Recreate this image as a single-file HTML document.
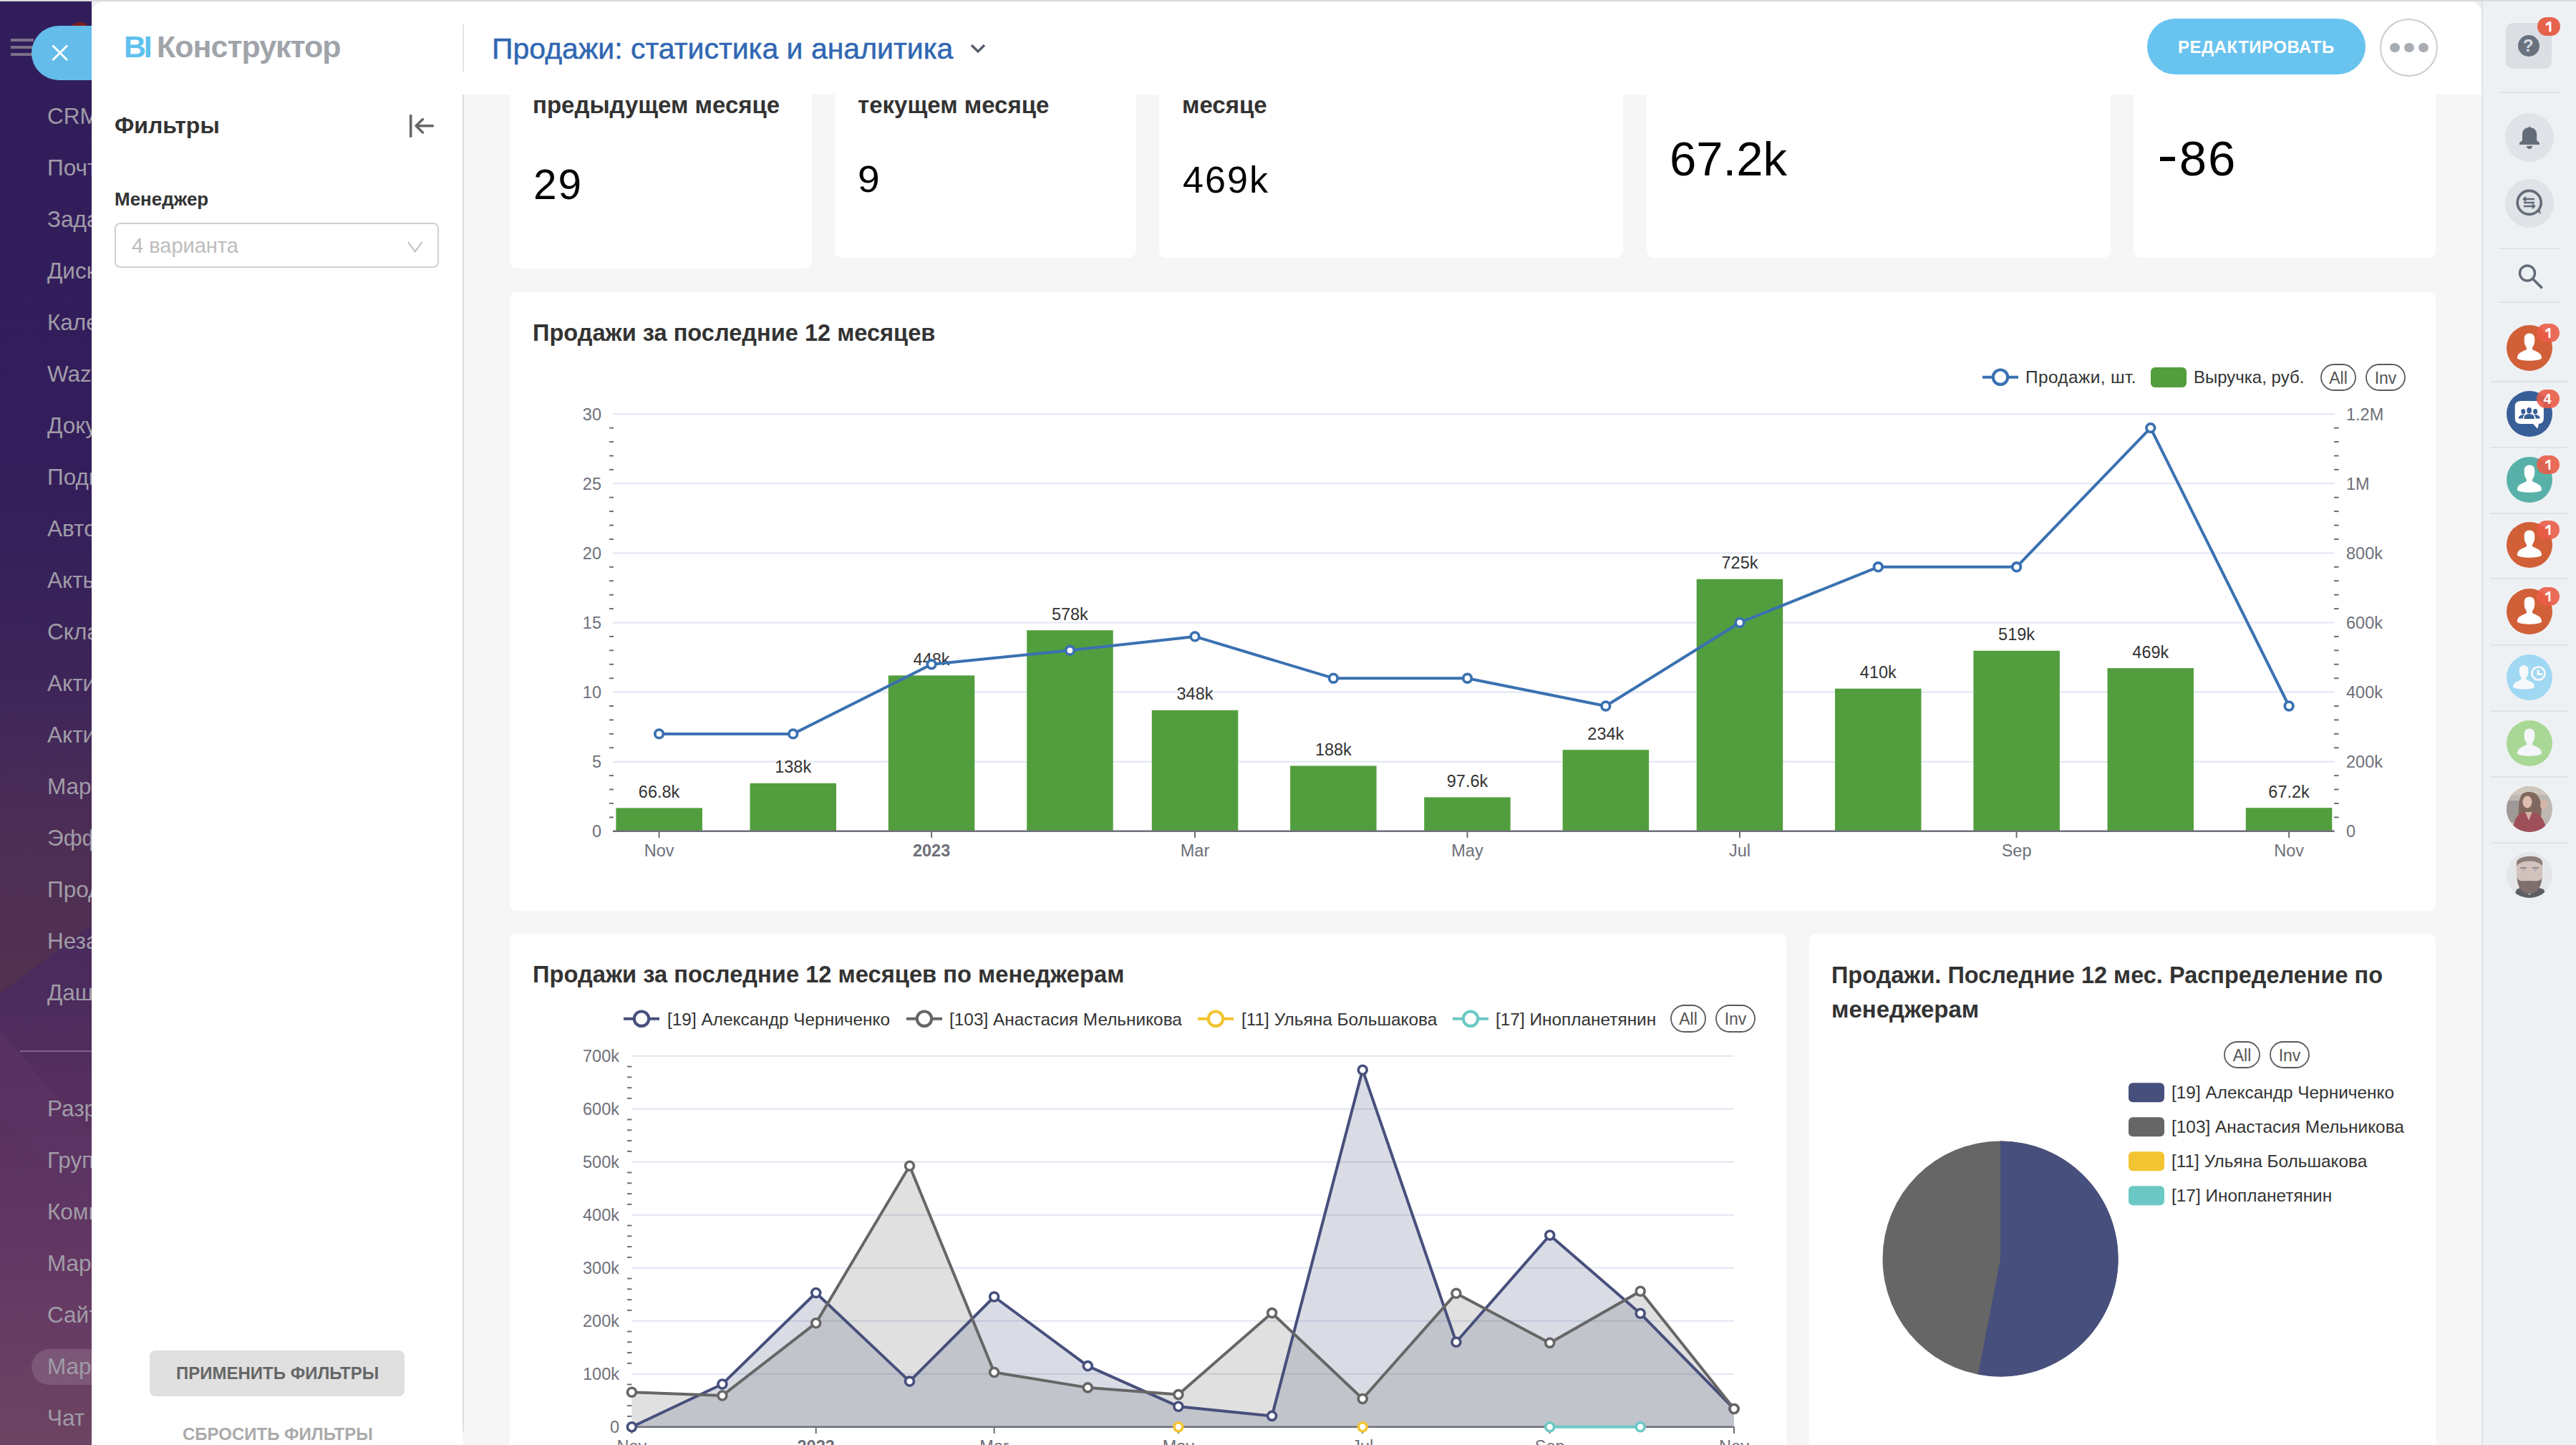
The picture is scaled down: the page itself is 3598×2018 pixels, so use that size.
<!DOCTYPE html><html><head><meta charset='utf-8'><style>
*{box-sizing:border-box;margin:0;padding:0}
html,body{width:3598px;height:2018px;overflow:hidden;background:#fff;font-family:"Liberation Sans", sans-serif}
.a{position:absolute}
.t{position:absolute;white-space:nowrap;line-height:1}
</style></head><body>
<div class='a' style='left:0;top:0;width:140px;height:2018px;overflow:hidden;background:linear-gradient(180deg,#321d5b 0px,#331e5b 650px,#3b2459 900px,#46295b 1150px,#4c2b5d 1400px,#58305f 1550px,#633764 1750px,#6e4463 2018px)'>
<svg class='a' style='left:0;top:0' width='140' height='2018'><defs><linearGradient id='lg1' x1='0' y1='0' x2='0' y2='1'><stop offset='0' stop-color='#43285a' stop-opacity='0'/><stop offset='0.5' stop-color='#4c2d55'/><stop offset='1' stop-color='#523150'/></linearGradient></defs><polygon points='0,980 140,930 140,1283 0,1387' fill='url(#lg1)'/><polygon points='0,1440 140,1600 140,1700 0,1560' fill='#5e3566' opacity='0.5'/></svg>
<div class='a' style='left:15px;top:54px;width:32px;height:3.8px;background:#7b7189'></div>
<div class='a' style='left:15px;top:64px;width:32px;height:3.8px;background:#7b7189'></div>
<div class='a' style='left:15px;top:74px;width:32px;height:3.8px;background:#7b7189'></div>
<div class='t' style='left:66px;top:147.4px;font-size:31.5px;color:#a09ca7'>CRM</div>
<div class='t' style='left:66px;top:219.4px;font-size:31.5px;color:#a09ca7'>Почта</div>
<div class='t' style='left:66px;top:291.4px;font-size:31.5px;color:#a09ca7'>Задачи</div>
<div class='t' style='left:66px;top:363.4px;font-size:31.5px;color:#a09ca7'>Диск</div>
<div class='t' style='left:66px;top:435.4px;font-size:31.5px;color:#a09ca7'>Календарь</div>
<div class='t' style='left:66px;top:507.4px;font-size:31.5px;color:#a09ca7'>Wazzup</div>
<div class='t' style='left:66px;top:579.4px;font-size:31.5px;color:#a09ca7'>Документы</div>
<div class='t' style='left:66px;top:651.4px;font-size:31.5px;color:#a09ca7'>Подписи</div>
<div class='t' style='left:66px;top:723.4px;font-size:31.5px;color:#a09ca7'>Автоматизация</div>
<div class='t' style='left:66px;top:795.4px;font-size:31.5px;color:#a09ca7'>Акты</div>
<div class='t' style='left:66px;top:867.4px;font-size:31.5px;color:#a09ca7'>Склад</div>
<div class='t' style='left:66px;top:939.4px;font-size:31.5px;color:#a09ca7'>Активности</div>
<div class='t' style='left:66px;top:1011.4px;font-size:31.5px;color:#a09ca7'>Активности</div>
<div class='t' style='left:66px;top:1083.4px;font-size:31.5px;color:#a09ca7'>Маркетинг</div>
<div class='t' style='left:66px;top:1155.4px;font-size:31.5px;color:#a09ca7'>Эффективность</div>
<div class='t' style='left:66px;top:1227.4px;font-size:31.5px;color:#a09ca7'>Продажи</div>
<div class='t' style='left:66px;top:1299.4px;font-size:31.5px;color:#a09ca7'>Незавершённые</div>
<div class='t' style='left:66px;top:1371.4px;font-size:31.5px;color:#a09ca7'>Дашборды</div>
<div class='a' style='left:28px;top:1467px;width:120px;height:2px;background:rgba(255,255,255,0.25)'></div>
<div class='t' style='left:66px;top:1533.3px;font-size:31.5px;color:#a09ca7'>Разработчикам</div>
<div class='t' style='left:66px;top:1605.3px;font-size:31.5px;color:#a09ca7'>Группы</div>
<div class='t' style='left:66px;top:1677.3px;font-size:31.5px;color:#a09ca7'>Компания</div>
<div class='t' style='left:66px;top:1749.3px;font-size:31.5px;color:#a09ca7'>Маркетплейс</div>
<div class='t' style='left:66px;top:1821.3px;font-size:31.5px;color:#a09ca7'>Сайты</div>
<div class='a' style='left:44px;top:1884px;width:140px;height:50px;border-radius:25px;background:rgba(255,255,255,0.13)'></div>
<div class='t' style='left:66px;top:1893.3px;font-size:31.5px;color:#a09ca7'>Маркетинг</div>
<div class='t' style='left:66px;top:1965.3px;font-size:31.5px;color:#a09ca7'>Чат и звонки</div>
</div>
<div class='a' style='left:3466px;top:0;width:132px;height:2018px;background:#eef1f4;border-left:2px solid #dde2e6'></div>
<div class='a' style='left:128px;top:0;width:30px;height:30px;background:#eceff2'></div>
<div class='a' style='left:3436px;top:0;width:30px;height:30px;background:#edf0f3'></div>
<div class='a' style='left:128px;top:2px;width:3338px;height:2016px;background:#fff;border-radius:17px 17px 0 0'></div>
<div class='a' style='left:646px;top:132px;width:2820px;height:1886px;background:#f6f6f6'></div>
<div class='a' style='left:712px;top:60px;width:422px;height:315px;background:#fff;border-radius:10px'></div>
<div class='a' style='left:1166px;top:60px;width:421px;height:300px;background:#fff;border-radius:10px'></div>
<div class='a' style='left:1619px;top:60px;width:648px;height:300px;background:#fff;border-radius:10px'></div>
<div class='a' style='left:2300px;top:60px;width:648px;height:300px;background:#fff;border-radius:10px'></div>
<div class='a' style='left:2980px;top:60px;width:422px;height:300px;background:#fff;border-radius:10px'></div>
<div class='a' style='left:712px;top:408px;width:2690px;height:864px;background:#fff;border-radius:10px'></div>
<div class='a' style='left:712px;top:1304px;width:1783px;height:796px;background:#fff;border-radius:10px'></div>
<div class='a' style='left:2527px;top:1304px;width:875px;height:796px;background:#fff;border-radius:10px'></div>
<div class='a' style='left:647px;top:2px;width:2819px;height:130px;background:#fff;border-top-right-radius:17px'></div>
<div class='a' style='left:0;top:0;width:3466px;height:2px;background:#d9dadd'></div>
<div class='a' style='left:3466px;top:0;width:132px;height:2px;background:#d9dadd'></div>
<div class='t' style='left:744px;top:130px;font-size:33px;font-weight:700;color:#333'>предыдущем месяце</div>
<div class='t' style='left:1198px;top:130px;font-size:33px;font-weight:700;color:#333'>текущем месяце</div>
<div class='t' style='left:1651px;top:130px;font-size:33px;font-weight:700;color:#333'>месяце</div>
<div class='a' style='left:647px;top:2px;width:2819px;height:130px;background:#fff;border-top-right-radius:17px'></div>
<div class='t' style='left:745px;top:228.6px;font-size:58.5px;color:#000;letter-spacing:2px;transform:scaleX(1);transform-origin:0 0'>29</div>
<div class='t' style='left:1198px;top:223.7px;font-size:52px;color:#000;letter-spacing:0px;transform:scaleX(1.06);transform-origin:0 0'>9</div>
<div class='t' style='left:1652px;top:224.7px;font-size:52px;color:#000;letter-spacing:2.1px;transform:scaleX(1);transform-origin:0 0'>469k</div>
<div class='t' style='left:2332px;top:187.5px;font-size:67px;color:#000;letter-spacing:0px;transform:scaleX(1);transform-origin:0 0'>67.2k</div>
<div class='a' style='left:3017px;top:219px;width:21px;height:5.6px;background:#000'></div>
<div class='t' style='left:3043.7px;top:186.8px;font-size:69px;color:#000;letter-spacing:2px;transform:scaleX(1);transform-origin:0 0'>86</div>
<div class='a' style='left:100px;top:31px;width:22px;height:14px;border-radius:50% 50% 0 0;background:#7e1e1e'></div>
<div class='a' style='left:44px;top:36px;width:84px;height:76px;border-radius:38px 0 0 38px;background:#63bce9'></div>
<svg class='a' style='left:60px;top:50px' width='50' height='50' viewBox='0 0 50 50'><path d='M13.5 13.5 L34 34 M34 13.5 L13.5 34' stroke='#fff' stroke-width='3'/></svg>
<div class='t' style='left:173px;top:43.5px;font-size:43px;font-weight:700;color:#5ec1ef;letter-spacing:-3.2px'>BI</div>
<div class='t' style='left:219px;top:43.5px;font-size:43px;font-weight:700;color:#a0a4aa;letter-spacing:-1px'>Конструктор</div>
<div class='a' style='left:646px;top:34px;width:2px;height:66px;background:#e3e4e6'></div>
<div class='t' style='left:687px;top:48px;font-size:41px;color:#3067b2;-webkit-text-stroke:0.5px #3067b2'>Продажи: статистика и аналитика</div>
<svg class='a' style='left:1352px;top:56px' width='32' height='24' viewBox='0 0 32 24'><path d='M5 7 L14 16 L23 7' stroke='#535c69' stroke-width='3.2' fill='none'/></svg>
<div class='a' style='left:2999px;top:26px;width:305px;height:78px;border-radius:39px;background:#69c3ef'></div>
<div class='t' style='left:3042px;top:54px;font-size:24px;font-weight:700;color:#fff;letter-spacing:0.5px'>РЕДАКТИРОВАТЬ</div>
<div class='a' style='left:3324px;top:26px;width:81px;height:81px;border-radius:50%;border:2px solid #c9ccd0;background:#fff'></div>
<div class='a' style='left:3338.2px;top:59.9px;width:13.6px;height:13.6px;border-radius:50%;background:#a8adb4'></div>
<div class='a' style='left:3358.2px;top:59.9px;width:13.6px;height:13.6px;border-radius:50%;background:#a8adb4'></div>
<div class='a' style='left:3378.2px;top:59.9px;width:13.6px;height:13.6px;border-radius:50%;background:#a8adb4'></div>
<div class='t' style='left:160px;top:159px;font-size:32px;font-weight:700;color:#333'>Фильтры</div>
<svg class='a' style='left:565px;top:155px' width='50' height='42' viewBox='0 0 50 42'><path d='M8.7 6.5 V35.5' stroke='#666' stroke-width='3.6' stroke-linecap='round'/><path d='M16 20.8 H39.5 M25.5 11.5 L16 20.8 L25.5 30' stroke='#666' stroke-width='3.4' stroke-linecap='round' stroke-linejoin='round' fill='none'/></svg>
<div class='t' style='left:160px;top:265px;font-size:26px;font-weight:700;color:#333'>Менеджер</div>
<div class='a' style='left:160px;top:311px;width:453px;height:63px;border:2px solid #d0d0d0;border-radius:8px;background:#fff'></div>
<div class='t' style='left:184px;top:329px;font-size:29px;color:#bdbdbd'>4 варианта</div>
<svg class='a' style='left:565px;top:332px' width='30' height='24' viewBox='0 0 30 24'><path d='M5 6 L14.7 19.3 L24.6 6' stroke='#bdbdbd' stroke-width='2' fill='none'/></svg>
<div class='a' style='left:209px;top:1886px;width:356px;height:64px;border-radius:8px;background:#e0e0e0'></div>
<div class='t' style='left:246px;top:1906px;font-size:24px;font-weight:700;color:#666'>ПРИМЕНИТЬ ФИЛЬТРЫ</div>
<div class='t' style='left:255px;top:1991px;font-size:24px;font-weight:700;color:#aaa'>СБРОСИТЬ ФИЛЬТРЫ</div>
<div class='a' style='left:646px;top:132px;width:2px;height:1867px;background:#dedede'></div>
<svg class='a' style='left:0;top:0' width='3598' height='2018' viewBox='0 0 3598 2018' font-family='Liberation Sans, sans-serif'><line x1='856' x2='3260.7' y1='1063.7' y2='1063.7' stroke='#e0e6f1' stroke-width='2'/><line x1='856' x2='3260.7' y1='966.6' y2='966.6' stroke='#e0e6f1' stroke-width='2'/><line x1='856' x2='3260.7' y1='869.5' y2='869.5' stroke='#e0e6f1' stroke-width='2'/><line x1='856' x2='3260.7' y1='772.4' y2='772.4' stroke='#e0e6f1' stroke-width='2'/><line x1='856' x2='3260.7' y1='675.3' y2='675.3' stroke='#e0e6f1' stroke-width='2'/><line x1='856' x2='3260.7' y1='578.2' y2='578.2' stroke='#e0e6f1' stroke-width='2'/><line x1='851' x2='857' y1='1141.4' y2='1141.4' stroke='#6e7079' stroke-width='2'/><line x1='3260' x2='3266.7' y1='1141.4' y2='1141.4' stroke='#6e7079' stroke-width='2'/><line x1='851' x2='857' y1='1122.0' y2='1122.0' stroke='#6e7079' stroke-width='2'/><line x1='3260' x2='3266.7' y1='1122.0' y2='1122.0' stroke='#6e7079' stroke-width='2'/><line x1='851' x2='857' y1='1102.5' y2='1102.5' stroke='#6e7079' stroke-width='2'/><line x1='3260' x2='3266.7' y1='1102.5' y2='1102.5' stroke='#6e7079' stroke-width='2'/><line x1='851' x2='857' y1='1083.1' y2='1083.1' stroke='#6e7079' stroke-width='2'/><line x1='3260' x2='3266.7' y1='1083.1' y2='1083.1' stroke='#6e7079' stroke-width='2'/><line x1='851' x2='857' y1='1044.3' y2='1044.3' stroke='#6e7079' stroke-width='2'/><line x1='3260' x2='3266.7' y1='1044.3' y2='1044.3' stroke='#6e7079' stroke-width='2'/><line x1='851' x2='857' y1='1024.9' y2='1024.9' stroke='#6e7079' stroke-width='2'/><line x1='3260' x2='3266.7' y1='1024.9' y2='1024.9' stroke='#6e7079' stroke-width='2'/><line x1='851' x2='857' y1='1005.4' y2='1005.4' stroke='#6e7079' stroke-width='2'/><line x1='3260' x2='3266.7' y1='1005.4' y2='1005.4' stroke='#6e7079' stroke-width='2'/><line x1='851' x2='857' y1='986.0' y2='986.0' stroke='#6e7079' stroke-width='2'/><line x1='3260' x2='3266.7' y1='986.0' y2='986.0' stroke='#6e7079' stroke-width='2'/><line x1='851' x2='857' y1='947.2' y2='947.2' stroke='#6e7079' stroke-width='2'/><line x1='3260' x2='3266.7' y1='947.2' y2='947.2' stroke='#6e7079' stroke-width='2'/><line x1='851' x2='857' y1='927.8' y2='927.8' stroke='#6e7079' stroke-width='2'/><line x1='3260' x2='3266.7' y1='927.8' y2='927.8' stroke='#6e7079' stroke-width='2'/><line x1='851' x2='857' y1='908.3' y2='908.3' stroke='#6e7079' stroke-width='2'/><line x1='3260' x2='3266.7' y1='908.3' y2='908.3' stroke='#6e7079' stroke-width='2'/><line x1='851' x2='857' y1='888.9' y2='888.9' stroke='#6e7079' stroke-width='2'/><line x1='3260' x2='3266.7' y1='888.9' y2='888.9' stroke='#6e7079' stroke-width='2'/><line x1='851' x2='857' y1='850.1' y2='850.1' stroke='#6e7079' stroke-width='2'/><line x1='3260' x2='3266.7' y1='850.1' y2='850.1' stroke='#6e7079' stroke-width='2'/><line x1='851' x2='857' y1='830.7' y2='830.7' stroke='#6e7079' stroke-width='2'/><line x1='3260' x2='3266.7' y1='830.7' y2='830.7' stroke='#6e7079' stroke-width='2'/><line x1='851' x2='857' y1='811.2' y2='811.2' stroke='#6e7079' stroke-width='2'/><line x1='3260' x2='3266.7' y1='811.2' y2='811.2' stroke='#6e7079' stroke-width='2'/><line x1='851' x2='857' y1='791.8' y2='791.8' stroke='#6e7079' stroke-width='2'/><line x1='3260' x2='3266.7' y1='791.8' y2='791.8' stroke='#6e7079' stroke-width='2'/><line x1='851' x2='857' y1='753.0' y2='753.0' stroke='#6e7079' stroke-width='2'/><line x1='3260' x2='3266.7' y1='753.0' y2='753.0' stroke='#6e7079' stroke-width='2'/><line x1='851' x2='857' y1='733.6' y2='733.6' stroke='#6e7079' stroke-width='2'/><line x1='3260' x2='3266.7' y1='733.6' y2='733.6' stroke='#6e7079' stroke-width='2'/><line x1='851' x2='857' y1='714.1' y2='714.1' stroke='#6e7079' stroke-width='2'/><line x1='3260' x2='3266.7' y1='714.1' y2='714.1' stroke='#6e7079' stroke-width='2'/><line x1='851' x2='857' y1='694.7' y2='694.7' stroke='#6e7079' stroke-width='2'/><line x1='3260' x2='3266.7' y1='694.7' y2='694.7' stroke='#6e7079' stroke-width='2'/><line x1='851' x2='857' y1='655.9' y2='655.9' stroke='#6e7079' stroke-width='2'/><line x1='3260' x2='3266.7' y1='655.9' y2='655.9' stroke='#6e7079' stroke-width='2'/><line x1='851' x2='857' y1='636.5' y2='636.5' stroke='#6e7079' stroke-width='2'/><line x1='3260' x2='3266.7' y1='636.5' y2='636.5' stroke='#6e7079' stroke-width='2'/><line x1='851' x2='857' y1='617.0' y2='617.0' stroke='#6e7079' stroke-width='2'/><line x1='3260' x2='3266.7' y1='617.0' y2='617.0' stroke='#6e7079' stroke-width='2'/><line x1='851' x2='857' y1='597.6' y2='597.6' stroke='#6e7079' stroke-width='2'/><line x1='3260' x2='3266.7' y1='597.6' y2='597.6' stroke='#6e7079' stroke-width='2'/><text x='840' y='1169.3' text-anchor='end' font-size='23.5' fill='#6e7079'>0</text><text x='840' y='1072.2' text-anchor='end' font-size='23.5' fill='#6e7079'>5</text><text x='840' y='975.1' text-anchor='end' font-size='23.5' fill='#6e7079'>10</text><text x='840' y='878.0' text-anchor='end' font-size='23.5' fill='#6e7079'>15</text><text x='840' y='780.9' text-anchor='end' font-size='23.5' fill='#6e7079'>20</text><text x='840' y='683.8' text-anchor='end' font-size='23.5' fill='#6e7079'>25</text><text x='840' y='586.7' text-anchor='end' font-size='23.5' fill='#6e7079'>30</text><text x='3277' y='1169.3' font-size='23.5' fill='#6e7079'>0</text><text x='3277' y='1072.2' font-size='23.5' fill='#6e7079'>200k</text><text x='3277' y='975.1' font-size='23.5' fill='#6e7079'>400k</text><text x='3277' y='878.0' font-size='23.5' fill='#6e7079'>600k</text><text x='3277' y='780.9' font-size='23.5' fill='#6e7079'>800k</text><text x='3277' y='683.8' font-size='23.5' fill='#6e7079'>1M</text><text x='3277' y='586.7' font-size='23.5' fill='#6e7079'>1.2M</text><rect x='860.4' y='1128.4' width='120.5' height='32.4' fill='#529e3e'/><text x='920.6' y='1113.9' text-anchor='middle' font-size='23.5' fill='#333'>66.8k</text><rect x='1047.5' y='1093.8' width='120.5' height='67.0' fill='#529e3e'/><text x='1107.7' y='1079.3' text-anchor='middle' font-size='23.5' fill='#333'>138k</text><rect x='1240.8' y='943.3' width='120.5' height='217.5' fill='#529e3e'/><text x='1301.1' y='928.8' text-anchor='middle' font-size='23.5' fill='#333'>448k</text><rect x='1434.2' y='880.2' width='120.5' height='280.6' fill='#529e3e'/><text x='1494.4' y='865.7' text-anchor='middle' font-size='23.5' fill='#333'>578k</text><rect x='1608.8' y='991.8' width='120.5' height='169.0' fill='#529e3e'/><text x='1669.0' y='977.3' text-anchor='middle' font-size='23.5' fill='#333'>348k</text><rect x='1802.1' y='1069.5' width='120.5' height='91.3' fill='#529e3e'/><text x='1862.4' y='1055.0' text-anchor='middle' font-size='23.5' fill='#333'>188k</text><rect x='1989.2' y='1113.4' width='120.5' height='47.4' fill='#529e3e'/><text x='2049.5' y='1098.9' text-anchor='middle' font-size='23.5' fill='#333'>97.6k</text><rect x='2182.6' y='1047.2' width='120.5' height='113.6' fill='#529e3e'/><text x='2242.8' y='1032.7' text-anchor='middle' font-size='23.5' fill='#333'>234k</text><rect x='2369.7' y='808.8' width='120.5' height='352.0' fill='#529e3e'/><text x='2430.0' y='794.3' text-anchor='middle' font-size='23.5' fill='#333'>725k</text><rect x='2563.0' y='961.7' width='120.5' height='199.1' fill='#529e3e'/><text x='2623.3' y='947.2' text-anchor='middle' font-size='23.5' fill='#333'>410k</text><rect x='2756.4' y='908.8' width='120.5' height='252.0' fill='#529e3e'/><text x='2816.6' y='894.3' text-anchor='middle' font-size='23.5' fill='#333'>519k</text><rect x='2943.5' y='933.1' width='120.5' height='227.7' fill='#529e3e'/><text x='3003.8' y='918.6' text-anchor='middle' font-size='23.5' fill='#333'>469k</text><rect x='3136.8' y='1128.2' width='120.5' height='32.6' fill='#529e3e'/><text x='3197.1' y='1113.7' text-anchor='middle' font-size='23.5' fill='#333'>67.2k</text><line x1='856' x2='3260.7' y1='1160.8' y2='1160.8' stroke='#6e7079' stroke-width='2.4'/><line x1='920.6' x2='920.6' y1='1160.8' y2='1170' stroke='#6e7079' stroke-width='2'/><text x='920.6' y='1196' text-anchor='middle' font-size='23.5' fill='#6e7079' >Nov</text><line x1='1301.1' x2='1301.1' y1='1160.8' y2='1170' stroke='#6e7079' stroke-width='2'/><text x='1301.1' y='1196' text-anchor='middle' font-size='23.5' fill='#6e7079' font-weight="700">2023</text><line x1='1669.0' x2='1669.0' y1='1160.8' y2='1170' stroke='#6e7079' stroke-width='2'/><text x='1669.0' y='1196' text-anchor='middle' font-size='23.5' fill='#6e7079' >Mar</text><line x1='2049.5' x2='2049.5' y1='1160.8' y2='1170' stroke='#6e7079' stroke-width='2'/><text x='2049.5' y='1196' text-anchor='middle' font-size='23.5' fill='#6e7079' >May</text><line x1='2430.0' x2='2430.0' y1='1160.8' y2='1170' stroke='#6e7079' stroke-width='2'/><text x='2430.0' y='1196' text-anchor='middle' font-size='23.5' fill='#6e7079' >Jul</text><line x1='2816.6' x2='2816.6' y1='1160.8' y2='1170' stroke='#6e7079' stroke-width='2'/><text x='2816.6' y='1196' text-anchor='middle' font-size='23.5' fill='#6e7079' >Sep</text><line x1='3197.1' x2='3197.1' y1='1160.8' y2='1170' stroke='#6e7079' stroke-width='2'/><text x='3197.1' y='1196' text-anchor='middle' font-size='23.5' fill='#6e7079' >Nov</text><polyline points='920.6,1024.9 1107.7,1024.9 1301.1,927.8 1494.4,908.3 1669.0,888.9 1862.4,947.2 2049.5,947.2 2242.8,986.0 2430.0,869.5 2623.3,791.8 2816.6,791.8 3003.8,597.6 3197.1,986.0' fill='none' stroke='#3a71b1' stroke-width='4' stroke-linejoin='round'/><circle cx='920.6' cy='1024.9' r='5.8' fill='#fff' stroke='#3a71b1' stroke-width='3.8'/><circle cx='1107.7' cy='1024.9' r='5.8' fill='#fff' stroke='#3a71b1' stroke-width='3.8'/><circle cx='1301.1' cy='927.8' r='5.8' fill='#fff' stroke='#3a71b1' stroke-width='3.8'/><circle cx='1494.4' cy='908.3' r='5.8' fill='#fff' stroke='#3a71b1' stroke-width='3.8'/><circle cx='1669.0' cy='888.9' r='5.8' fill='#fff' stroke='#3a71b1' stroke-width='3.8'/><circle cx='1862.4' cy='947.2' r='5.8' fill='#fff' stroke='#3a71b1' stroke-width='3.8'/><circle cx='2049.5' cy='947.2' r='5.8' fill='#fff' stroke='#3a71b1' stroke-width='3.8'/><circle cx='2242.8' cy='986.0' r='5.8' fill='#fff' stroke='#3a71b1' stroke-width='3.8'/><circle cx='2430.0' cy='869.5' r='5.8' fill='#fff' stroke='#3a71b1' stroke-width='3.8'/><circle cx='2623.3' cy='791.8' r='5.8' fill='#fff' stroke='#3a71b1' stroke-width='3.8'/><circle cx='2816.6' cy='791.8' r='5.8' fill='#fff' stroke='#3a71b1' stroke-width='3.8'/><circle cx='3003.8' cy='597.6' r='5.8' fill='#fff' stroke='#3a71b1' stroke-width='3.8'/><circle cx='3197.1' cy='986.0' r='5.8' fill='#fff' stroke='#3a71b1' stroke-width='3.8'/><line x1='2769' x2='2819' y1='526.7' y2='526.7' stroke='#3a71b1' stroke-width='4'/><circle cx='2794' cy='526.7' r='10.2' fill='#fff' stroke='#3a71b1' stroke-width='4.2'/><text x='2829' y='535.4' font-size='24.4' fill='#333' letter-spacing='0.4'>Продажи, шт.</text><rect x='3004' y='513' width='50' height='28' rx='6' fill='#529e3e'/><text x='3064' y='535.4' font-size='24' fill='#333'>Выручка, руб.</text><rect x='3242' y='509' width='48' height='36' rx='18.0' fill='#fff' stroke='#5a5a5a' stroke-width='1.8'/><text x='3266.0' y='535.5' text-anchor='middle' font-size='23' fill='#555'>All</text><rect x='3305' y='509' width='54' height='36' rx='18.0' fill='#fff' stroke='#5a5a5a' stroke-width='1.8'/><text x='3332.0' y='535.5' text-anchor='middle' font-size='23' fill='#555'>Inv</text><text x='744' y='475.5' font-size='32.6' font-weight='700' fill='#333'>Продажи за последние 12 месяцев</text><line x1='882.4' x2='2422' y1='1918.7' y2='1918.7' stroke='#e0e6f1' stroke-width='2'/><line x1='882.4' x2='2422' y1='1844.7' y2='1844.7' stroke='#e0e6f1' stroke-width='2'/><line x1='882.4' x2='2422' y1='1770.7' y2='1770.7' stroke='#e0e6f1' stroke-width='2'/><line x1='882.4' x2='2422' y1='1696.7' y2='1696.7' stroke='#e0e6f1' stroke-width='2'/><line x1='882.4' x2='2422' y1='1622.7' y2='1622.7' stroke='#e0e6f1' stroke-width='2'/><line x1='882.4' x2='2422' y1='1548.7' y2='1548.7' stroke='#e0e6f1' stroke-width='2'/><line x1='882.4' x2='2422' y1='1474.7' y2='1474.7' stroke='#e0e6f1' stroke-width='2'/><line x1='876' x2='882.4' y1='1977.9' y2='1977.9' stroke='#6e7079' stroke-width='2'/><line x1='876' x2='882.4' y1='1963.1' y2='1963.1' stroke='#6e7079' stroke-width='2'/><line x1='876' x2='882.4' y1='1948.3' y2='1948.3' stroke='#6e7079' stroke-width='2'/><line x1='876' x2='882.4' y1='1933.5' y2='1933.5' stroke='#6e7079' stroke-width='2'/><line x1='876' x2='882.4' y1='1903.9' y2='1903.9' stroke='#6e7079' stroke-width='2'/><line x1='876' x2='882.4' y1='1889.1' y2='1889.1' stroke='#6e7079' stroke-width='2'/><line x1='876' x2='882.4' y1='1874.3' y2='1874.3' stroke='#6e7079' stroke-width='2'/><line x1='876' x2='882.4' y1='1859.5' y2='1859.5' stroke='#6e7079' stroke-width='2'/><line x1='876' x2='882.4' y1='1829.9' y2='1829.9' stroke='#6e7079' stroke-width='2'/><line x1='876' x2='882.4' y1='1815.1' y2='1815.1' stroke='#6e7079' stroke-width='2'/><line x1='876' x2='882.4' y1='1800.3' y2='1800.3' stroke='#6e7079' stroke-width='2'/><line x1='876' x2='882.4' y1='1785.5' y2='1785.5' stroke='#6e7079' stroke-width='2'/><line x1='876' x2='882.4' y1='1755.9' y2='1755.9' stroke='#6e7079' stroke-width='2'/><line x1='876' x2='882.4' y1='1741.1' y2='1741.1' stroke='#6e7079' stroke-width='2'/><line x1='876' x2='882.4' y1='1726.3' y2='1726.3' stroke='#6e7079' stroke-width='2'/><line x1='876' x2='882.4' y1='1711.5' y2='1711.5' stroke='#6e7079' stroke-width='2'/><line x1='876' x2='882.4' y1='1681.9' y2='1681.9' stroke='#6e7079' stroke-width='2'/><line x1='876' x2='882.4' y1='1667.1' y2='1667.1' stroke='#6e7079' stroke-width='2'/><line x1='876' x2='882.4' y1='1652.3' y2='1652.3' stroke='#6e7079' stroke-width='2'/><line x1='876' x2='882.4' y1='1637.5' y2='1637.5' stroke='#6e7079' stroke-width='2'/><line x1='876' x2='882.4' y1='1607.9' y2='1607.9' stroke='#6e7079' stroke-width='2'/><line x1='876' x2='882.4' y1='1593.1' y2='1593.1' stroke='#6e7079' stroke-width='2'/><line x1='876' x2='882.4' y1='1578.3' y2='1578.3' stroke='#6e7079' stroke-width='2'/><line x1='876' x2='882.4' y1='1563.5' y2='1563.5' stroke='#6e7079' stroke-width='2'/><line x1='876' x2='882.4' y1='1533.9' y2='1533.9' stroke='#6e7079' stroke-width='2'/><line x1='876' x2='882.4' y1='1519.1' y2='1519.1' stroke='#6e7079' stroke-width='2'/><line x1='876' x2='882.4' y1='1504.3' y2='1504.3' stroke='#6e7079' stroke-width='2'/><line x1='876' x2='882.4' y1='1489.5' y2='1489.5' stroke='#6e7079' stroke-width='2'/><text x='865' y='2001.2' text-anchor='end' font-size='23.5' fill='#6e7079'>0</text><text x='865' y='1927.2' text-anchor='end' font-size='23.5' fill='#6e7079'>100k</text><text x='865' y='1853.2' text-anchor='end' font-size='23.5' fill='#6e7079'>200k</text><text x='865' y='1779.2' text-anchor='end' font-size='23.5' fill='#6e7079'>300k</text><text x='865' y='1705.2' text-anchor='end' font-size='23.5' fill='#6e7079'>400k</text><text x='865' y='1631.2' text-anchor='end' font-size='23.5' fill='#6e7079'>500k</text><text x='865' y='1557.2' text-anchor='end' font-size='23.5' fill='#6e7079'>600k</text><text x='865' y='1483.2' text-anchor='end' font-size='23.5' fill='#6e7079'>700k</text><polygon points='882.4,1992.7 882.4,1992.7 1008.9,1933.0 1139.7,1805.5 1270.5,1929.1 1388.6,1811.0 1519.3,1907.6 1645.9,1964.2 1776.6,1977.4 1903.2,1494.2 2033.9,1874.3 2164.7,1725.0 2291.2,1834.3 2422.0,1967.5 2422.0,1992.7' fill='rgba(71,79,124,0.2)'/><polygon points='882.4,1992.7 882.4,1944.2 1008.9,1949.0 1139.7,1847.7 1270.5,1628.2 1388.6,1916.5 1519.3,1937.9 1645.9,1947.6 1776.6,1833.6 1903.2,1953.5 2033.9,1806.2 2164.7,1875.4 2291.2,1803.3 2422.0,1967.5 2422.0,1992.7' fill='rgba(102,102,102,0.2)'/><line x1='882.4' x2='2422' y1='1992.7' y2='1992.7' stroke='#6e7079' stroke-width='2.4'/><line x1='882.4' x2='882.4' y1='1992.7' y2='2002' stroke='#6e7079' stroke-width='2'/><text x='882.4' y='2028' text-anchor='middle' font-size='23.5' fill='#6e7079' >Nov</text><line x1='1139.7' x2='1139.7' y1='1992.7' y2='2002' stroke='#6e7079' stroke-width='2'/><text x='1139.7' y='2028' text-anchor='middle' font-size='23.5' fill='#6e7079' font-weight="700">2023</text><line x1='1388.6' x2='1388.6' y1='1992.7' y2='2002' stroke='#6e7079' stroke-width='2'/><text x='1388.6' y='2028' text-anchor='middle' font-size='23.5' fill='#6e7079' >Mar</text><line x1='1645.9' x2='1645.9' y1='1992.7' y2='2002' stroke='#6e7079' stroke-width='2'/><text x='1645.9' y='2028' text-anchor='middle' font-size='23.5' fill='#6e7079' >May</text><line x1='1903.2' x2='1903.2' y1='1992.7' y2='2002' stroke='#6e7079' stroke-width='2'/><text x='1903.2' y='2028' text-anchor='middle' font-size='23.5' fill='#6e7079' >Jul</text><line x1='2164.7' x2='2164.7' y1='1992.7' y2='2002' stroke='#6e7079' stroke-width='2'/><text x='2164.7' y='2028' text-anchor='middle' font-size='23.5' fill='#6e7079' >Sep</text><line x1='2422.0' x2='2422.0' y1='1992.7' y2='2002' stroke='#6e7079' stroke-width='2'/><text x='2422.0' y='2028' text-anchor='middle' font-size='23.5' fill='#6e7079' >Nov</text><polyline points='882.4,1992.7 1008.9,1933.0 1139.7,1805.5 1270.5,1929.1 1388.6,1811.0 1519.3,1907.6 1645.9,1964.2 1776.6,1977.4 1903.2,1494.2 2033.9,1874.3 2164.7,1725.0 2291.2,1834.3 2422.0,1967.5' fill='none' stroke='#474f7c' stroke-width='4' stroke-linejoin='round'/><polyline points='882.4,1944.2 1008.9,1949.0 1139.7,1847.7 1270.5,1628.2 1388.6,1916.5 1519.3,1937.9 1645.9,1947.6 1776.6,1833.6 1903.2,1953.5 2033.9,1806.2 2164.7,1875.4 2291.2,1803.3 2422.0,1967.5' fill='none' stroke='#666666' stroke-width='4' stroke-linejoin='round'/><line x1='2164.7' x2='2291.2' y1='1992.7' y2='1992.7' stroke='#6cc8c5' stroke-width='4'/><circle cx='882.4' cy='1992.7' r='6' fill='#fff' stroke='#474f7c' stroke-width='3.6'/><circle cx='1008.9' cy='1933.0' r='6' fill='#fff' stroke='#474f7c' stroke-width='3.6'/><circle cx='1139.7' cy='1805.5' r='6' fill='#fff' stroke='#474f7c' stroke-width='3.6'/><circle cx='1270.5' cy='1929.1' r='6' fill='#fff' stroke='#474f7c' stroke-width='3.6'/><circle cx='1388.6' cy='1811.0' r='6' fill='#fff' stroke='#474f7c' stroke-width='3.6'/><circle cx='1519.3' cy='1907.6' r='6' fill='#fff' stroke='#474f7c' stroke-width='3.6'/><circle cx='1645.9' cy='1964.2' r='6' fill='#fff' stroke='#474f7c' stroke-width='3.6'/><circle cx='1776.6' cy='1977.4' r='6' fill='#fff' stroke='#474f7c' stroke-width='3.6'/><circle cx='1903.2' cy='1494.2' r='6' fill='#fff' stroke='#474f7c' stroke-width='3.6'/><circle cx='2033.9' cy='1874.3' r='6' fill='#fff' stroke='#474f7c' stroke-width='3.6'/><circle cx='2164.7' cy='1725.0' r='6' fill='#fff' stroke='#474f7c' stroke-width='3.6'/><circle cx='2291.2' cy='1834.3' r='6' fill='#fff' stroke='#474f7c' stroke-width='3.6'/><circle cx='2422.0' cy='1967.5' r='6' fill='#fff' stroke='#474f7c' stroke-width='3.6'/><circle cx='882.4' cy='1944.2' r='6' fill='#fff' stroke='#666666' stroke-width='3.6'/><circle cx='1008.9' cy='1949.0' r='6' fill='#fff' stroke='#666666' stroke-width='3.6'/><circle cx='1139.7' cy='1847.7' r='6' fill='#fff' stroke='#666666' stroke-width='3.6'/><circle cx='1270.5' cy='1628.2' r='6' fill='#fff' stroke='#666666' stroke-width='3.6'/><circle cx='1388.6' cy='1916.5' r='6' fill='#fff' stroke='#666666' stroke-width='3.6'/><circle cx='1519.3' cy='1937.9' r='6' fill='#fff' stroke='#666666' stroke-width='3.6'/><circle cx='1645.9' cy='1947.6' r='6' fill='#fff' stroke='#666666' stroke-width='3.6'/><circle cx='1776.6' cy='1833.6' r='6' fill='#fff' stroke='#666666' stroke-width='3.6'/><circle cx='1903.2' cy='1953.5' r='6' fill='#fff' stroke='#666666' stroke-width='3.6'/><circle cx='2033.9' cy='1806.2' r='6' fill='#fff' stroke='#666666' stroke-width='3.6'/><circle cx='2164.7' cy='1875.4' r='6' fill='#fff' stroke='#666666' stroke-width='3.6'/><circle cx='2291.2' cy='1803.3' r='6' fill='#fff' stroke='#666666' stroke-width='3.6'/><circle cx='2422.0' cy='1967.5' r='6' fill='#fff' stroke='#666666' stroke-width='3.6'/><circle cx='1645.9' cy='1992.7' r='6' fill='#fff' stroke='#f2c431' stroke-width='3.6'/><circle cx='1903.2' cy='1992.7' r='6' fill='#fff' stroke='#f2c431' stroke-width='3.6'/><circle cx='2164.7' cy='1992.7' r='6' fill='#fff' stroke='#6cc8c5' stroke-width='3.6'/><circle cx='2291.2' cy='1992.7' r='6' fill='#fff' stroke='#6cc8c5' stroke-width='3.6'/><line x1='871' x2='921' y1='1422.7' y2='1422.7' stroke='#474f7c' stroke-width='4'/><circle cx='896.0' cy='1422.7' r='10.2' fill='#fff' stroke='#474f7c' stroke-width='4.2'/><text x='932' y='1431.5' font-size='24.4' fill='#333'>[19] Александр Черниченко</text><line x1='1266' x2='1316' y1='1422.7' y2='1422.7' stroke='#666666' stroke-width='4'/><circle cx='1291.0' cy='1422.7' r='10.2' fill='#fff' stroke='#666666' stroke-width='4.2'/><text x='1326' y='1431.5' font-size='24.4' fill='#333'>[103] Анастасия Мельникова</text><line x1='1673' x2='1723' y1='1422.7' y2='1422.7' stroke='#f2c431' stroke-width='4'/><circle cx='1698.0' cy='1422.7' r='10.2' fill='#fff' stroke='#f2c431' stroke-width='4.2'/><text x='1734' y='1431.5' font-size='24.4' fill='#333'>[11] Ульяна Большакова</text><line x1='2029' x2='2079' y1='1422.7' y2='1422.7' stroke='#6cc8c5' stroke-width='4'/><circle cx='2054.0' cy='1422.7' r='10.2' fill='#fff' stroke='#6cc8c5' stroke-width='4.2'/><text x='2089' y='1431.5' font-size='24.4' fill='#333'>[17] Инопланетянин</text><rect x='2334' y='1404' width='48' height='37' rx='18.5' fill='#fff' stroke='#5a5a5a' stroke-width='1.8'/><text x='2358.0' y='1431.0' text-anchor='middle' font-size='23' fill='#555'>All</text><rect x='2397' y='1404' width='54' height='37' rx='18.5' fill='#fff' stroke='#5a5a5a' stroke-width='1.8'/><text x='2424.0' y='1431.0' text-anchor='middle' font-size='23' fill='#555'>Inv</text><text x='744' y='1372' font-size='32.7' font-weight='700' fill='#333'>Продажи за последние 12 месяцев по менеджерам</text><circle cx='2794' cy='1758' r='164.5' fill='#666666'/><path d='M2794,1758 L2794,1593.5 A164.5,164.5 0 1 1 2762.9,1919.5 Z' fill='#474f7c'/><text x='2558' y='1372.5' font-size='32.5' font-weight='700' fill='#333'>Продажи. Последние 12 мес. Распределение по</text><text x='2558' y='1420.5' font-size='33' font-weight='700' fill='#333'>менеджерам</text><rect x='3107' y='1455' width='49' height='36' rx='18.0' fill='#fff' stroke='#5a5a5a' stroke-width='1.8'/><text x='3131.5' y='1481.5' text-anchor='middle' font-size='23' fill='#555'>All</text><rect x='3171' y='1455' width='54' height='36' rx='18.0' fill='#fff' stroke='#5a5a5a' stroke-width='1.8'/><text x='3198.0' y='1481.5' text-anchor='middle' font-size='23' fill='#555'>Inv</text><rect x='2973' y='1512.2' width='50' height='27' rx='6' fill='#474f7c'/><text x='3033' y='1534.2' font-size='24.4' fill='#333'>[19] Александр Черниченко</text><rect x='2973' y='1560.2' width='50' height='27' rx='6' fill='#666666'/><text x='3033' y='1582.2' font-size='24.4' fill='#333'>[103] Анастасия Мельникова</text><rect x='2973' y='1608.2' width='50' height='27' rx='6' fill='#f2c431'/><text x='3033' y='1630.2' font-size='24.4' fill='#333'>[11] Ульяна Большакова</text><rect x='2973' y='1656.2' width='50' height='27' rx='6' fill='#6cc8c5'/><text x='3033' y='1678.2' font-size='24.4' fill='#333'>[17] Инопланетянин</text></svg>
<div class='a' style='left:3500px;top:32px;width:64px;height:64px;border-radius:10px;background:#dbdee2'></div>
<div class='a' style='left:3517px;top:49px;width:30px;height:30px;border-radius:50%;background:#6a7280'></div>
<div class='t' style='left:3524px;top:52px;font-size:24px;font-weight:700;color:#dbdee2'>?</div>
<div class='a' style='left:3544px;top:24px;width:32px;height:26px;border-radius:13px;background:#e5624c'></div>
<svg class='a' style='left:3544px;top:24px' width='32' height='26' viewBox='0 0 32 26'><path d='M15.8 6 H19.4 V20.3 H16.3 V10.2 L11.8 12.2 V9.2 Z' fill='#fff'/></svg>
<div class='a' style='left:3490px;top:128px;width:86px;height:2px;background:#dfe3e7'></div>
<div class='a' style='left:3499px;top:158px;width:68px;height:68px;border-radius:50%;background:#dfe2e6'></div>
<svg class='a' style='left:3513px;top:172px' width='40' height='40' viewBox='0 0 40 40'><path d='M20 4 L21.3 5.9 C27 6.6 30.2 10 30.2 16 V24 L34 27.6 V30 H6 V27.6 L10 24 V16 C10 10 13 6.6 18.7 5.9 Z' fill='#646c79'/><path d='M16 31.7 H24 A4 4.3 0 0 1 16 31.7 Z' fill='#646c79'/></svg>
<div class='a' style='left:3499px;top:250px;width:68px;height:68px;border-radius:50%;background:#dfe2e6'></div>
<svg class='a' style='left:3510px;top:260px' width='46' height='46' viewBox='0 0 46 46'><circle cx='22.7' cy='22.9' r='16.5' fill='none' stroke='#646c79' stroke-width='3.6'/><path d='M33 35 L39 39 L37 31 Z' fill='#646c79'/><path d='M15 18 H30 M15 23 H30 M15 28 H30' stroke='#646c79' stroke-width='2.6'/><path d='M18 15 L15 18 L18 21 M27 25 L30 28 L27 31' stroke='#646c79' stroke-width='2.4' fill='none'/></svg>
<div class='a' style='left:3490px;top:346px;width:86px;height:2px;background:#dfe3e7'></div>
<svg class='a' style='left:3510px;top:360px' width='50' height='50' viewBox='0 0 50 50'><circle cx='20' cy='21.5' r='10.5' fill='none' stroke='#646c79' stroke-width='3.4'/><path d='M28 29.8 L40.7 42.4' stroke='#646c79' stroke-width='3.6'/></svg>
<div class='a' style='left:3490px;top:421px;width:86px;height:2px;background:#dfe3e7'></div>
<div class='a' style='left:3501px;top:454px;width:64px;height:64px;border-radius:50%;background:#d15f38'></div>
<svg class='a' style='left:3503px;top:456px' width='60' height='60' viewBox='0 0 60 60'><path d='M30 9.5 C24.6 9.5 22.7 13 22.7 18 C22.7 22 23 25 24.5 27 C25.5 28.8 26.2 30 26.2 31 C26.2 32.5 24 33 21 34.5 C17 36.5 13 38 12.8 44.5 C18 48.8 42 48.8 47.2 44.5 C47 38 43 36.5 39 34.5 C36 33 33.8 32.5 33.8 31 C33.8 30 34.5 28.8 35.5 27 C37 25 37.3 22 37.3 18 C37.3 13 35.4 9.5 30 9.5 Z' fill='#fff'/></svg>
<div class='a' style='left:3543px;top:452px;width:32px;height:26px;border-radius:13px;background:rgba(234,92,72,0.9)'></div>
<svg class='a' style='left:3543px;top:452px' width='32' height='26' viewBox='0 0 32 26'><path d='M16.4 6 H19.2 V20 H16.5 V10 L12 12 V9.6 Z' fill='#fff'/></svg>
<div class='a' style='left:3478px;top:532px;width:110px;height:2px;background:#dfe3e7'></div>
<div class='a' style='left:3501px;top:546px;width:64px;height:64px;border-radius:50%;background:#385e97'></div>
<svg class='a' style='left:3503px;top:548px' width='60' height='60' viewBox='0 0 60 60'><path d='M9.7 20 Q9.7 12 18 12 H42 Q49.9 12 49.9 20 V36 Q49.9 44 42 44 H43 L41.3 50.7 L35 44 H18 Q9.7 44 9.7 36 Z' fill='#fff'/><ellipse cx='29.6' cy='25.2' rx='3.4' ry='4.2' fill='#385e97'/><path d='M22.2 37 Q22.5 31 27.5 30.2 L31.7 30.2 Q36.8 31 37 37 Z' fill='#385e97'/><ellipse cx='21.3' cy='26.8' rx='3' ry='3.7' fill='#385e97'/><path d='M14.6 36.5 Q15 32 19.5 31.2 L23.5 31.5 Q21 33 20.8 36.5 Z' fill='#385e97'/><ellipse cx='38.2' cy='26.8' rx='3' ry='3.7' fill='#385e97'/><path d='M44.8 36.5 Q44.4 32 40 31.2 L36 31.5 Q38.5 33 38.8 36.5 Z' fill='#385e97'/></svg>
<div class='a' style='left:3543px;top:544px;width:32px;height:26px;border-radius:13px;background:rgba(234,92,72,0.9)'></div>
<div class='t' style='left:3552.5px;top:546.5px;font-size:20px;font-weight:700;color:#fff'>4</div>
<div class='a' style='left:3478px;top:624px;width:110px;height:2px;background:#dfe3e7'></div>
<div class='a' style='left:3501px;top:638px;width:64px;height:64px;border-radius:50%;background:#58b1a8'></div>
<svg class='a' style='left:3503px;top:640px' width='60' height='60' viewBox='0 0 60 60'><path d='M30 9.5 C24.6 9.5 22.7 13 22.7 18 C22.7 22 23 25 24.5 27 C25.5 28.8 26.2 30 26.2 31 C26.2 32.5 24 33 21 34.5 C17 36.5 13 38 12.8 44.5 C18 48.8 42 48.8 47.2 44.5 C47 38 43 36.5 39 34.5 C36 33 33.8 32.5 33.8 31 C33.8 30 34.5 28.8 35.5 27 C37 25 37.3 22 37.3 18 C37.3 13 35.4 9.5 30 9.5 Z' fill='#fff'/></svg>
<div class='a' style='left:3543px;top:636px;width:32px;height:26px;border-radius:13px;background:rgba(234,92,72,0.9)'></div>
<svg class='a' style='left:3543px;top:636px' width='32' height='26' viewBox='0 0 32 26'><path d='M16.4 6 H19.2 V20 H16.5 V10 L12 12 V9.6 Z' fill='#fff'/></svg>
<div class='a' style='left:3478px;top:716px;width:110px;height:2px;background:#dfe3e7'></div>
<div class='a' style='left:3501px;top:729px;width:64px;height:64px;border-radius:50%;background:#d15f38'></div>
<svg class='a' style='left:3503px;top:731px' width='60' height='60' viewBox='0 0 60 60'><path d='M30 9.5 C24.6 9.5 22.7 13 22.7 18 C22.7 22 23 25 24.5 27 C25.5 28.8 26.2 30 26.2 31 C26.2 32.5 24 33 21 34.5 C17 36.5 13 38 12.8 44.5 C18 48.8 42 48.8 47.2 44.5 C47 38 43 36.5 39 34.5 C36 33 33.8 32.5 33.8 31 C33.8 30 34.5 28.8 35.5 27 C37 25 37.3 22 37.3 18 C37.3 13 35.4 9.5 30 9.5 Z' fill='#fff'/></svg>
<div class='a' style='left:3543px;top:727px;width:32px;height:26px;border-radius:13px;background:rgba(234,92,72,0.9)'></div>
<svg class='a' style='left:3543px;top:727px' width='32' height='26' viewBox='0 0 32 26'><path d='M16.4 6 H19.2 V20 H16.5 V10 L12 12 V9.6 Z' fill='#fff'/></svg>
<div class='a' style='left:3478px;top:807px;width:110px;height:2px;background:#dfe3e7'></div>
<div class='a' style='left:3501px;top:822px;width:64px;height:64px;border-radius:50%;background:#d15f38'></div>
<svg class='a' style='left:3503px;top:824px' width='60' height='60' viewBox='0 0 60 60'><path d='M30 9.5 C24.6 9.5 22.7 13 22.7 18 C22.7 22 23 25 24.5 27 C25.5 28.8 26.2 30 26.2 31 C26.2 32.5 24 33 21 34.5 C17 36.5 13 38 12.8 44.5 C18 48.8 42 48.8 47.2 44.5 C47 38 43 36.5 39 34.5 C36 33 33.8 32.5 33.8 31 C33.8 30 34.5 28.8 35.5 27 C37 25 37.3 22 37.3 18 C37.3 13 35.4 9.5 30 9.5 Z' fill='#fff'/></svg>
<div class='a' style='left:3543px;top:820px;width:32px;height:26px;border-radius:13px;background:rgba(234,92,72,0.9)'></div>
<svg class='a' style='left:3543px;top:820px' width='32' height='26' viewBox='0 0 32 26'><path d='M16.4 6 H19.2 V20 H16.5 V10 L12 12 V9.6 Z' fill='#fff'/></svg>
<div class='a' style='left:3478px;top:900px;width:110px;height:2px;background:#dfe3e7'></div>
<div class='a' style='left:3501px;top:914px;width:64px;height:64px;border-radius:50%;background:#a0d8f3'></div>
<svg class='a' style='left:3498.8px;top:920.7px' width='52.2' height='52.2' viewBox='0 0 60 60'><path d='M30 9.5 C24.6 9.5 22.7 13 22.7 18 C22.7 22 23 25 24.5 27 C25.5 28.8 26.2 30 26.2 31 C26.2 32.5 24 33 21 34.5 C17 36.5 13 38 12.8 44.5 C18 48.8 42 48.8 47.2 44.5 C47 38 43 36.5 39 34.5 C36 33 33.8 32.5 33.8 31 C33.8 30 34.5 28.8 35.5 27 C37 25 37.3 22 37.3 18 C37.3 13 35.4 9.5 30 9.5 Z' fill='#f6f8fa'/></svg>
<svg class='a' style='left:3530px;top:925px' width='32' height='32' viewBox='0 0 32 32'><circle cx='15.5' cy='15.4' r='9.1' fill='none' stroke='#f6f8fa' stroke-width='2.8'/><path d='M15.1 10.2 V16.5 H20.9' stroke='#f6f8fa' stroke-width='3' fill='none'/></svg>
<div class='a' style='left:3478px;top:992px;width:110px;height:2px;background:#dfe3e7'></div>
<div class='a' style='left:3501px;top:1006px;width:64px;height:64px;border-radius:50%;background:#a9d896'></div>
<svg class='a' style='left:3503px;top:1008px' width='60' height='60' viewBox='0 0 60 60'><path d='M30 9.5 C24.6 9.5 22.7 13 22.7 18 C22.7 22 23 25 24.5 27 C25.5 28.8 26.2 30 26.2 31 C26.2 32.5 24 33 21 34.5 C17 36.5 13 38 12.8 44.5 C18 48.8 42 48.8 47.2 44.5 C47 38 43 36.5 39 34.5 C36 33 33.8 32.5 33.8 31 C33.8 30 34.5 28.8 35.5 27 C37 25 37.3 22 37.3 18 C37.3 13 35.4 9.5 30 9.5 Z' fill='#f4f6f9'/></svg>
<div class='a' style='left:3478px;top:1084px;width:110px;height:2px;background:#dfe3e7'></div>
<svg class='a' style='left:3501px;top:1098px' width='64' height='64' viewBox='0 0 64 64'><defs><clipPath id='c1'><circle cx='32' cy='32' r='32'/></clipPath><clipPath id='c2'><circle cx='32' cy='32' r='32'/></clipPath></defs><g clip-path='url(#c1)'><rect width='64' height='64' fill='#b4aba4'/><rect x='0' y='20' width='20' height='30' fill='#8e8784'/><rect x='0' y='0' width='64' height='12' fill='#c9beb3'/><path d='M20 14 C22 6 40 6 44 14 C50 22 50 40 46 50 L18 50 C16 40 16 22 20 14 Z' fill='#6a4a3f'/><ellipse cx='29' cy='22' rx='6.5' ry='8.5' fill='#d9b2a2'/><path d='M8 64 C10 44 18 36 26 36 L30 44 L36 36 C46 38 54 46 56 64 Z' fill='#8e2b38'/><path d='M26 36 L31 48 L36 36 Z' fill='#cfa28f'/><ellipse cx='52' cy='26' rx='5' ry='7' fill='#d0a898'/><rect width='64' height='64' fill='rgba(240,242,245,0.18)'/></g></svg>
<div class='a' style='left:3478px;top:1176px;width:110px;height:2px;background:#dfe3e7'></div>
<svg class='a' style='left:3501px;top:1190px' width='64' height='64' viewBox='0 0 64 64'><g clip-path='url(#c2)'><rect width='64' height='64' fill='#e3e4e6'/><path d='M10 64 L14 52 L24 48 L40 48 L52 52 L56 64 Z' fill='#44464c'/><path d='M24 50 L32 60 L40 50 Z' fill='#dfe3ea'/><path d='M14 20 C14 4 48 2 50 18 L50 34 C50 48 42 56 32 56 C22 56 14 48 14 34 Z' fill='#cdbab3'/><path d='M15 36 C15 50 22 58 32 58 C42 58 49 50 49 36 C46 42 40 40 32 40 C24 40 18 42 15 36 Z' fill='#6b5a55'/><path d='M19 22 H28 M36 22 H45' stroke='#8a7772' stroke-width='2'/><circle cx='24' cy='25' r='1.5' fill='#8fa3b8'/><circle cx='40' cy='25' r='1.5' fill='#8fa3b8'/><path d='M14 14 C16 4 48 2 50 14 L50 20 C46 10 18 10 14 20 Z' fill='#7d6a66'/><rect width='64' height='64' fill='rgba(240,242,245,0.15)'/></g></svg>
</body></html>
